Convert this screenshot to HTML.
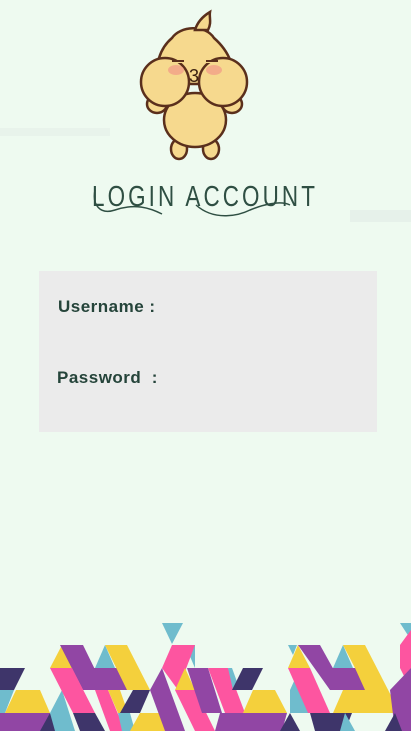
<!DOCTYPE html>
<html><head><meta charset="utf-8">
<style>
html,body{margin:0;padding:0}
body{width:411px;height:731px;overflow:hidden;background:#eefaf0;position:relative;font-family:"Liberation Sans",sans-serif}
.box{position:absolute;left:39px;top:271px;width:338px;height:161px;background:#ebebeb}
.lbl{position:absolute;font-weight:bold;font-size:17px;color:#25443a;letter-spacing:0.5px}
svg{position:absolute;left:0;top:0}
</style></head><body>
<svg width="411" height="731" viewBox="0 0 411 731">
 <rect x="0" y="128" width="110" height="8" fill="#e6f1ea" opacity="0.8"/>
 <rect x="350" y="210" width="61" height="12" fill="#e4efe8" opacity="0.8"/>
 <g stroke="#5a2f1c" stroke-width="2.5" fill="#f6d98e">
  <ellipse cx="179" cy="149" rx="8" ry="10"/>
  <ellipse cx="211" cy="149" rx="8" ry="10"/>
  <ellipse cx="195" cy="120" rx="31" ry="27"/>
  <ellipse cx="157" cy="104" rx="10" ry="9"/>
  <ellipse cx="232" cy="104" rx="10" ry="9"/>
  <path d="M172 38 C180 26 205 24 214 38 C230 52 236 70 232 84 L158 84 C154 66 160 48 172 38Z"/>
  <path d="M195 30 C198 20 205 15 210 12 C209 18 212 22 208 30Z"/>
  <circle cx="165" cy="82" r="24"/>
  <circle cx="223" cy="82" r="24"/>
 </g>
 <ellipse cx="176" cy="70" rx="8" ry="5" fill="#f2a088" opacity="0.8"/>
 <ellipse cx="214" cy="70" rx="8" ry="5" fill="#f2a088" opacity="0.8"/>
 <rect x="172" y="60" width="48" height="3" fill="#f6d98e"/>
 <path d="M172 61 h12 M206 61 h12" stroke="#5a2f1c" stroke-width="2"/>
 <text x="189" y="82" font-size="18" font-family="Liberation Sans,sans-serif" fill="#3a2010">3</text>
 <text x="92" y="206" font-size="29" fill="#2f4f43" textLength="226" lengthAdjust="spacingAndGlyphs" font-family="Liberation Sans,sans-serif" style="letter-spacing:4px">LOGIN ACCOUNT</text>
 <path d="M95 190 C92 205 100 215 115 210 C135 203 150 208 162 214" stroke="#2f4f43" stroke-width="1.5" fill="none"/>
 <path d="M196 205 C215 222 240 215 250 210 C262 205 280 200 290 205" stroke="#2f4f43" stroke-width="1.5" fill="none"/>
 <g>
  <polygon points="162,623 183,623 172,644" fill="#6fbccd"/>
  <polygon points="400,623 411,623 411,640" fill="#6fbccd"/>
  <polygon points="288,645 297,645 293,655" fill="#6fbccd"/>
  <polygon points="0,668 25,668 14,690 0,690" fill="#3e356a"/>
  <polygon points="0,690 14,690 5,713 0,713" fill="#6fbccd"/>
  <polygon points="5,713 16,690 40,690 50,713" fill="#f4d03c"/>
  <polygon points="0,713 50,713 45,731 0,731" fill="#9146a4"/>
  <polygon points="40,731 50,713 58,731" fill="#3e356a"/>
  <polygon points="50,713 62,690 75,731 55,731" fill="#6fbccd"/>
  <polygon points="50,668 62,645 72,668" fill="#f4d03c"/>
  <polygon points="60,645 83,645 105,690 83,690" fill="#9146a4"/>
  <polygon points="83,668 127,668 127,690 83,690" fill="#9146a4"/>
  <polygon points="50,668 72,668 95,713 73,713" fill="#fd55a0"/>
  <polygon points="95,668 105,645 115,668" fill="#6fbccd"/>
  <polygon points="105,645 127,645 150,690 127,690" fill="#f4d03c"/>
  <polygon points="73,713 95,713 105,731 80,731" fill="#3e356a"/>
  <polygon points="95,690 108,690 125,731 110,731" fill="#fd55a0"/>
  <polygon points="108,690 120,690 128,713 118,713" fill="#f4d03c"/>
  <polygon points="120,713 133,690 150,690 140,713" fill="#3e356a"/>
  <polygon points="118,713 130,713 135,731 122,731" fill="#6fbccd"/>
  <polygon points="130,731 140,713 160,713 170,731" fill="#f4d03c"/>
  <polygon points="185,645 195,645 195,668" fill="#6fbccd"/>
  <polygon points="172,645 195,645 178,690 162,668" fill="#fd55a0"/>
  <polygon points="150,690 162,668 185,731 165,731" fill="#9146a4"/>
  <polygon points="175,690 185,668 195,690" fill="#f4d03c"/>
  <polygon points="175,690 195,690 215,731 195,731" fill="#fd55a0"/>
  <polygon points="187,668 208,668 222,713 202,713" fill="#9146a4"/>
  <polygon points="208,668 228,668 245,713 225,713" fill="#fd55a0"/>
  <polygon points="228,668 232,668 240,690 233,690" fill="#6fbccd"/>
  <polygon points="232,690 243,668 263,668 252,690" fill="#3e356a"/>
  <polygon points="243,713 253,690 275,690 287,713" fill="#f4d03c"/>
  <polygon points="220,713 287,713 282,731 215,731" fill="#9146a4"/>
  <polygon points="280,731 290,713 300,731" fill="#3e356a"/>
  <polygon points="290,690 300,668 315,713 290,713" fill="#6fbccd"/>
  <polygon points="288,668 298,645 310,668" fill="#f4d03c"/>
  <polygon points="298,645 320,645 345,690 330,690" fill="#9146a4"/>
  <polygon points="288,668 310,668 330,713 308,713" fill="#fd55a0"/>
  <polygon points="320,668 365,668 365,690 330,690" fill="#9146a4"/>
  <polygon points="333,668 343,645 353,668" fill="#6fbccd"/>
  <polygon points="343,645 365,645 400,713 333,713 343,690 365,690 355,668" fill="#f4d03c"/>
  <polygon points="310,713 352,713 345,731 315,731" fill="#3e356a"/>
  <polygon points="345,713 355,731 340,731" fill="#6fbccd"/>
  <polygon points="400,645 411,630 411,690 400,668" fill="#fd55a0"/>
  <polygon points="390,690 411,668 411,731 395,731" fill="#9146a4"/>
  <polygon points="385,731 395,713 402,731" fill="#3e356a"/>
 </g>
</svg>
<div class="box"></div>
<div class="lbl" style="left:58px;top:297px">Username :</div>
<div class="lbl" style="left:57px;top:368px">Password&nbsp;&nbsp;:</div>
</body></html>
